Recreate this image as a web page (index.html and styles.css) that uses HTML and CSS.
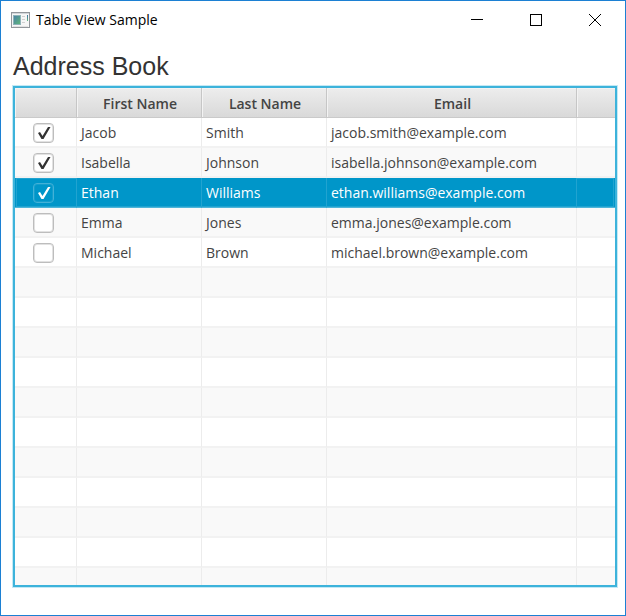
FILE: index.html
```html
<!DOCTYPE html>
<html lang="en">
<head>
    <meta charset="UTF-8">
    <meta name="viewport" content="width=device-width, initial-scale=1.0">
    <title>Table View Sample</title>
    <link rel="stylesheet" href="styles.css">
</head>
<body>
    <div class="window">
        <header class="title-bar">
            <svg class="app-icon" width="19" height="16" viewBox="0 0 19 16" aria-hidden="true">
                <defs>
                    <linearGradient id="pane" x1="0" y1="0" x2="1" y2="1">
                        <stop offset="0" stop-color="#4a7fa8"/>
                        <stop offset="1" stop-color="#5fb878"/>
                    </linearGradient>
                    <linearGradient id="bar" x1="0" y1="0" x2="0" y2="1">
                        <stop offset="0" stop-color="#3f73a8"/>
                        <stop offset="1" stop-color="#62b57c"/>
                    </linearGradient>
                </defs>
                <rect x="0.5" y="0.5" width="18" height="15" fill="#f6f6f6" stroke="#92969b"/>
                <rect x="1" y="1" width="17" height="1" fill="#d3d6da"/>
                <rect x="2.5" y="3.5" width="7" height="9" fill="url(#pane)" stroke="#8fb3b8"/>
                <path d="M11 4.5h3M11 7.5h3M11 10.5h3" stroke="#d0d0d0"/>
                <rect x="16" y="3" width="1" height="6" fill="url(#bar)"/>
                <rect x="2" y="14" width="15" height="1" fill="#e2e2e2"/>
            </svg>
            <span class="title">Table View Sample</span>
            <div class="window-buttons">
                <button type="button" aria-label="Minimize">
                    <svg width="12" height="12"><path d="M0 5.5h12" stroke="#000"/></svg>
                </button>
                <button type="button" aria-label="Maximize">
                    <svg width="12" height="12"><rect x="0.5" y="0.5" width="11" height="11" fill="none" stroke="#000"/></svg>
                </button>
                <button type="button" aria-label="Close">
                    <svg width="12" height="12"><path d="M0 0L12 12M12 0L0 12" stroke="#000"/></svg>
                </button>
            </div>
        </header>

        <main class="content">
            <h1>Address Book</h1>
            <div class="table-view">
                <table>
                    <colgroup>
                        <col class="col-check">
                        <col class="col-name">
                        <col class="col-name">
                        <col class="col-email">
                        <col>
                    </colgroup>
                    <thead>
                        <tr><th></th><th>First Name</th><th>Last Name</th><th>Email</th><th></th></tr>
                    </thead>
                    <tbody>
                        <tr>
                            <td class="check"><input type="checkbox" aria-label="Jacob Smith" checked></td>
                            <td>Jacob</td><td>Smith</td><td>jacob.smith@example.com</td><td></td>
                        </tr>
                        <tr>
                            <td class="check"><input type="checkbox" aria-label="Isabella Johnson" checked></td>
                            <td>Isabella</td><td>Johnson</td><td>isabella.johnson@example.com</td><td></td>
                        </tr>
                        <tr class="selected">
                            <td class="check"><input type="checkbox" aria-label="Ethan Williams" checked></td>
                            <td>Ethan</td><td>Williams</td><td>ethan.williams@example.com</td><td></td>
                        </tr>
                        <tr>
                            <td class="check"><input type="checkbox" aria-label="Emma Jones"></td>
                            <td>Emma</td><td>Jones</td><td>emma.jones@example.com</td><td></td>
                        </tr>
                        <tr>
                            <td class="check"><input type="checkbox" aria-label="Michael Brown"></td>
                            <td>Michael</td><td>Brown</td><td>michael.brown@example.com</td><td></td>
                        </tr>
                        <!-- empty rows -->
                        <tr><td></td><td></td><td></td><td></td><td></td></tr>
                        <tr><td></td><td></td><td></td><td></td><td></td></tr>
                        <tr><td></td><td></td><td></td><td></td><td></td></tr>
                        <tr><td></td><td></td><td></td><td></td><td></td></tr>
                        <tr><td></td><td></td><td></td><td></td><td></td></tr>
                        <tr><td></td><td></td><td></td><td></td><td></td></tr>
                        <tr><td></td><td></td><td></td><td></td><td></td></tr>
                        <tr><td></td><td></td><td></td><td></td><td></td></tr>
                        <tr><td></td><td></td><td></td><td></td><td></td></tr>
                        <tr><td></td><td></td><td></td><td></td><td></td></tr>
                        <tr><td></td><td></td><td></td><td></td><td></td></tr>
                    </tbody>
                </table>
            </div>
        </main>
    </div>
</body>
</html>
```

FILE: styles.css
```css
* {
    box-sizing: border-box;
}

body {
    margin: 0;
    font-family: "Open Sans", "Noto Sans", sans-serif;
    font-size: 14px;
    color: #444;
    background: #fff;
}

.window {
    display: flex;
    flex-direction: column;
    height: 100vh;
    border: 1px solid #1c80d3;
}

/* Title bar */
.title-bar {
    display: flex;
    align-items: center;
    height: 37px;
    padding-left: 10px;
    color: #000;
}

.title {
    margin-left: 6px;
}

.window-buttons {
    display: flex;
    gap: 1px;
    height: 100%;
    margin-left: auto;
    margin-right: 1px;
}

.window-buttons button {
    display: flex;
    align-items: center;
    justify-content: center;
    width: 58px;
    padding: 0;
    border: 0;
    background: none;
}

.window-buttons button:hover {
    background: #e5e5e5;
}

/* Content */
.content {
    display: flex;
    flex: 1;
    flex-direction: column;
    min-height: 0;
    padding: 14px 8px 28px 12px;
}

h1 {
    margin: 0 0 5px;
    font-family: "Liberation Sans", Arial, sans-serif;
    font-size: 25px;
    font-weight: normal;
    line-height: 29px;
    color: #333;
}

.table-view {
    flex: 1;
    min-height: 0;
    overflow: hidden;
    border: 2px solid #3db3db;
    box-shadow: 0 0 0 1px #c3e9f5;
}

table {
    width: 100%;
    table-layout: fixed;
    border-collapse: separate;
    border-spacing: 0;
}

.col-check {
    width: 62px;
}

.col-name {
    width: 125px;
}

.col-email {
    width: 250px;
}

th {
    height: 30px;
    padding: 1px 2px 0 4px;
    font-weight: 600;
    background: linear-gradient(#ededed, #d9d9d9);
    border-right: 1px solid #c6c6c6;
    border-bottom: 1px solid #cacaca;
    box-shadow: inset 1px 1px 0 #f3f3f3;
}

td {
    height: 30px;
    padding: 0 4px;
    white-space: nowrap;
    border-right: 1px solid #ececec;
    border-bottom: 2px solid #f2f2f2;
}

th:last-child,
td:last-child {
    border-right: 0;
}

tbody tr:nth-child(even) {
    background: #f9f9f9;
}

tbody .selected {
    color: #fff;
    background: #0096c9;
}

.selected td {
    border-right-color: #21a3d0;
    border-bottom: 1px solid #4db5d9;
    box-shadow: inset 0 2px 0 -1px #0096c9, inset 0 1px 0 #21a3d0, inset 0 -1px 0 #21a3d0;
}

.selected td:first-child {
    box-shadow: inset 1px 0 0 #0096c9, inset 2px 1px 0 #21a3d0, inset 0 -1px 0 #21a3d0;
}

.selected td:last-child {
    box-shadow: inset -1px 0 0 #0096c9, inset -2px 1px 0 #21a3d0, inset 0 -1px 0 #21a3d0;
}

/* Check boxes */
td.check {
    padding: 1px 0 0 18px;
}

input[type="checkbox"] {
    display: block;
    appearance: none;
    width: 21px;
    height: 20px;
    margin: 0;
    border: 1px solid #bdbdbd;
    border-radius: 4px;
    background: #fff center / 18px 18px no-repeat;
    box-shadow: inset 0 0 0 1px #e2e2e2;
}

input[type="checkbox"]:checked {
    background-image: url("data:image/svg+xml,%3Csvg xmlns='http://www.w3.org/2000/svg' viewBox='0 0 18 18'%3E%3Cpath d='M3 9L5 8L7.500 12L13 3L15.500 3L8.500 15L6.500 15Z' fill='%23333'/%3E%3C/svg%3E");
}

.selected input[type="checkbox"] {
    border-color: #43b1d7;
    background-color: #0096c9;
    box-shadow: inset 0 0 0 1px #159ecd;
}

.selected input[type="checkbox"]:checked {
    background-image: url("data:image/svg+xml,%3Csvg xmlns='http://www.w3.org/2000/svg' viewBox='0 0 18 18'%3E%3Cpath d='M3 9L5 8L7.500 12L13 3L15.500 3L8.500 15L6.500 15Z' fill='%23fff'/%3E%3C/svg%3E");
}
```
